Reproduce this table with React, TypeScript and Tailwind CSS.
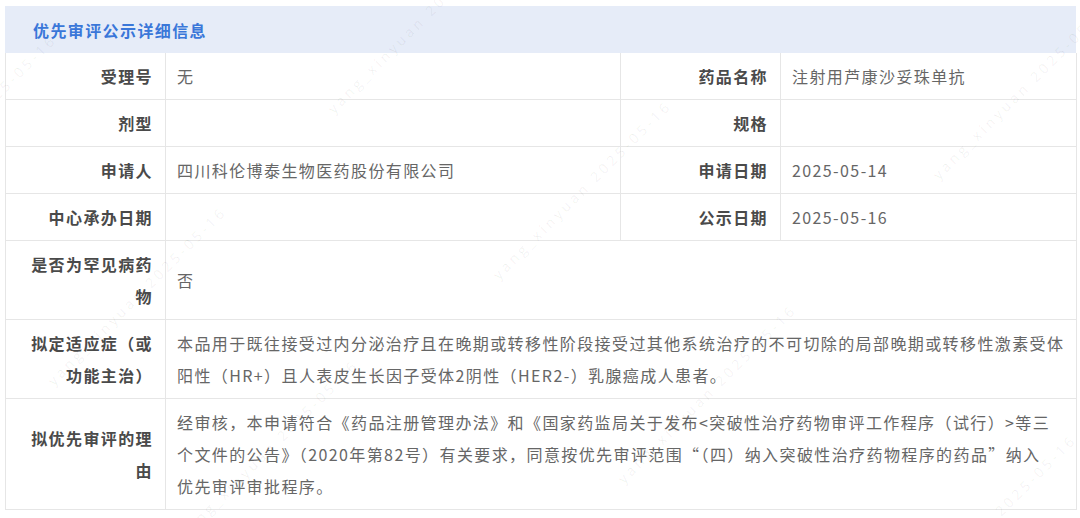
import React from "react";

const font = { fontFamily: '"Noto Sans CJK SC", "Noto Sans", sans-serif' };

const Label = ({ children }: { children: React.ReactNode }) => (
  <div className="flex items-center justify-end px-3 py-[7px] text-right font-bold text-[#4a4a4a] border-r border-b border-[#e6e6e6] leading-8">
    <span>{children}</span>
  </div>
);

const Value = ({
  children,
  wide = false,
}: {
  children?: React.ReactNode;
  wide?: boolean;
}) => (
  <div
    className={`flex items-center pl-[11px] pr-[10px] py-[7px] text-[#666666] border-r border-b border-[#e6e6e6] leading-8 ${
      wide ? "col-span-3" : ""
    }`}
  >
    <span>{children}</span>
  </div>
);

const marks = [
  { left: "left-[-120px]", top: "top-[200px]" },
  { left: "left-[330px]", top: "top-[100px]" },
  { left: "left-[495px]", top: "top-[266px]" },
  { left: "left-[935px]", top: "top-[166px]" },
  { left: "left-[50px]", top: "top-[372px]" },
  { left: "left-[182px]", top: "top-[525px]" },
  { left: "left-[620px]", top: "top-[470px]" },
  { left: "left-[900px]", top: "top-[600px]" },
];

export default function App() {
  return (
    <div
      className="relative w-[1080px] h-[518px] overflow-hidden bg-white pt-[6px] pl-[5px] text-[16px] tracking-[1.4px]"
      style={font}
    >
      <div className="w-[1071px]">
        <div className="h-[47px] flex items-center pl-[28px] bg-[#e6ecf8] font-bold text-[#3a77d9]">
          优先审评公示详细信息
        </div>

        <div className="grid grid-cols-[160px_455px_160px_296px] border-l border-[#e6e6e6]">
          <Label>受理号</Label>
          <Value>无</Value>
          <Label>药品名称</Label>
          <Value>注射用芦康沙妥珠单抗</Value>

          <Label>剂型</Label>
          <Value />
          <Label>规格</Label>
          <Value />

          <Label>申请人</Label>
          <Value>四川科伦博泰生物医药股份有限公司</Value>
          <Label>申请日期</Label>
          <Value>2025-05-14</Value>

          <Label>中心承办日期</Label>
          <Value />
          <Label>公示日期</Label>
          <Value>2025-05-16</Value>

          <Label>是否为罕见病药物</Label>
          <Value wide>否</Value>

          <Label>拟定适应症（或功能主治）</Label>
          <Value wide>
            本品用于既往接受过内分泌治疗且在晚期或转移性阶段接受过其他系统治疗的不可切除的局部晚期或转移性激素受体阳性（HR+）且人表皮生长因子受体2阴性（HER2-）乳腺癌成人患者。
          </Value>

          <Label>拟优先审评的理由</Label>
          <Value wide>
            经审核，本申请符合《药品注册管理办法》和《国家药监局关于发布&lt;突破性治疗药物审评工作程序（试行）&gt;等三个文件的公告》（2020年第82号）有关要求，同意按优先审评范围“（四）纳入突破性治疗药物程序的药品”纳入
            <br />
            优先审评审批程序。
          </Value>
        </div>
      </div>

      {marks.map((m, i) => (
        <div
          key={i}
          className={`pointer-events-none absolute ${m.left} ${m.top} origin-left -rotate-45 whitespace-nowrap text-[14px] tracking-[3.5px] text-black/[0.06]`}
          style={{ fontFamily: '"Open Sans", sans-serif' }}
        >
          yang_xinyuan 2025-05-16
        </div>
      ))}
    </div>
  );
}
